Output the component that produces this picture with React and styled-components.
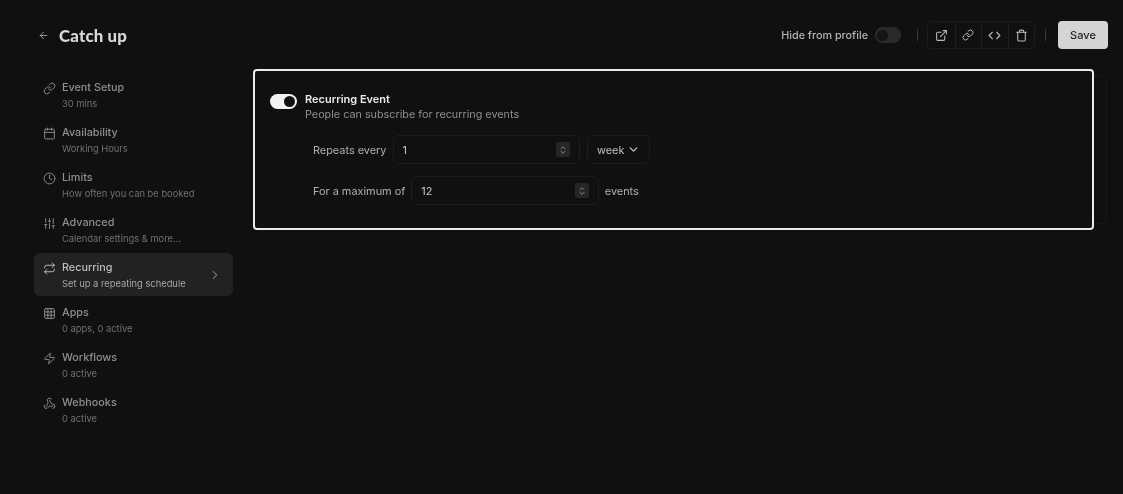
import React from "react";
import styled, { createGlobalStyle } from "styled-components";
import {
  ArrowLeft,
  Link,
  Calendar,
  Clock,
  SlidersVertical,
  Repeat,
  Grid3x3,
  Zap,
  Webhook,
  ChevronRight,
  ChevronDown,
  ChevronsUpDown,
  ExternalLink,
  Code,
  Trash,
} from "lucide-react";

const Global = createGlobalStyle`
  html, body {
    margin: 0;
    background: #101010;
  }
  body {
    font-family: Inter, "Liberation Sans", sans-serif;
    color: #d6d6d6;
    overflow: hidden;
  }
  * {
    box-sizing: border-box;
  }
`;

const Page = styled.div`
  width: 1123px;
  height: 494px;
  padding: 21px 15px 0 34px;
  background: #101010;
  filter: blur(0.45px);
`;

const Header = styled.header`
  display: flex;
  align-items: center;
  justify-content: space-between;
  height: 28px;
`;

const TitleRow = styled.div`
  display: flex;
  align-items: center;
  gap: 10px;
  padding-left: 4px;
  color: #b4b4b4;
`;

const Title = styled.h1`
  margin: 0;
  font-family: Lato, Inter, sans-serif;
  font-size: 16.8px;
  font-weight: 900;
  letter-spacing: 0.2px;
  color: #d8d8d8;
`;

const Actions = styled.div`
  display: flex;
  align-items: center;
`;

const HideLabel = styled.span`
  font-size: 10.8px;
  font-weight: 500;
  color: #b4b4b4;
  margin-right: 7px;
`;

const Toggle = styled.span`
  display: flex;
  align-items: center;
  justify-content: ${(p) => (p.$on ? "flex-end" : "flex-start")};
  width: ${(p) => (p.$on ? "27px" : "26px")};
  height: ${(p) => (p.$on ? "15px" : "16px")};
  padding: 2px;
  flex: none;
  border-radius: 9px;
  background: ${(p) => (p.$on ? "#f2f2f2" : "#2a2a2a")};

  &::after {
    content: "";
    width: 11px;
    height: 11px;
    border-radius: 50%;
    background: ${(p) => (p.$on ? "#101010" : "#141414")};
  }
`;

const Divider = styled.span`
  width: 1px;
  height: 12px;
  background: #3a3a3a;
  margin: 0 ${(p) => p.$after}px 0 ${(p) => p.$before}px;
`;

const IconGroup = styled.div`
  display: flex;
  height: 28px;
  border: 1px solid #1c1c1c;
  border-radius: 5px;
`;

const IconButton = styled.span`
  display: flex;
  align-items: center;
  justify-content: center;
  width: 26.5px;
  color: #b8b8b8;

  & + & {
    border-left: 1px solid #1c1c1c;
  }
`;

const SaveButton = styled.span`
  display: flex;
  align-items: center;
  justify-content: center;
  width: 50px;
  height: 28px;
  border-radius: 4px;
  background: #d4d4d4;
  color: #222;
  font-size: 11px;
  font-weight: 500;
`;

const Body = styled.div`
  display: flex;
  gap: 20px;
  margin-top: 20px;
`;

const Sidebar = styled.nav`
  display: flex;
  flex-direction: column;
  width: 199px;
  padding-top: 3px;
  flex: none;
`;

const NavItem = styled.div`
  display: flex;
  height: ${(p) => (p.$active ? "43px" : "45px")};
  margin: ${(p) => (p.$active ? "1px" : "0")} 0;
  padding: ${(p) => (p.$active ? "8px" : "9px")} 9px 0 8.5px;
  gap: 6.5px;
  border-radius: 6px;
  background: ${(p) => (p.$active ? "#222222" : "transparent")};
  color: ${(p) => (p.$active ? "#bdbdbd" : "#8f8f8f")};
`;

const NavIcon = styled.span`
  display: flex;
  width: 13px;
  height: 14px;
  align-items: center;
  flex: none;
`;

const NavText = styled.div`
  flex: 1;
`;

const NavTitle = styled.div`
  font-size: 10.8px;
  line-height: 14px;
  font-weight: 500;
`;

const NavSub = styled.div`
  font-size: 9.35px;
  line-height: 12px;
  margin-top: 3px;
  color: ${(p) => (p.$active ? "#a8a8a8" : "#717171")};
`;

const NavArrow = styled.span`
  display: flex;
  align-items: center;
  height: 27px;
  margin-right: 2px;
  color: #8a8a8a;
`;

const Main = styled.main`
  position: relative;
  flex: 1;
  height: 161px;
`;

const GhostEdge = styled.div`
  position: absolute;
  top: 6px;
  bottom: 6px;
  left: 0;
  right: 1px;
  border: 1px solid #181818;
  border-radius: 6px;
`;

const Card = styled.section`
  position: relative;
  width: 841px;
  height: 161px;
  padding: 21px 15px 0;
  border: 2px solid #ececec;
  border-radius: 4px;
  background: #101010;
`;

const ToggleRow = styled.div`
  display: flex;
  gap: 8px;
`;

const ToggleSlot = styled.div`
  padding-top: 2px;
`;

const FeatureTitle = styled.div`
  font-size: 11px;
  line-height: 14px;
  font-weight: 600;
  color: #e8e8e8;
`;

const FeatureSub = styled.div`
  font-size: 10.8px;
  line-height: 15px;
  margin-top: 1px;
  color: #8f8f8f;
`;

const Fields = styled.div`
  display: flex;
  flex-direction: column;
  gap: 12px;
  margin-top: 13px;
  padding-left: 43px;
`;

const FieldRow = styled.div`
  display: flex;
  align-items: center;
  gap: 6px;
  font-size: 10.9px;
  color: #b0b0b0;
`;

const NumberBox = styled.div`
  display: flex;
  align-items: center;
  justify-content: space-between;
  width: 187.5px;
  height: 29px;
  padding: 0 9px;
  border: 1px solid #1c1c1c;
  border-radius: 5px;
  color: #c8c8c8;
`;

const Stepper = styled.span`
  display: flex;
  align-items: center;
  justify-content: center;
  width: 14px;
  height: 15px;
  border-radius: 2px;
  background: #262626;
  color: #999;
`;

const SelectBox = styled.div`
  display: flex;
  align-items: center;
  gap: 3px;
  height: 29px;
  margin-left: 1px;
  padding: 0 9px;
  border: 1px solid #1c1c1c;
  border-radius: 5px;
  color: #c0c0c0;
`;

const navItems = [
  { icon: Link, title: "Event Setup", sub: "30 mins" },
  { icon: Calendar, title: "Availability", sub: "Working Hours" },
  { icon: Clock, title: "Limits", sub: "How often you can be booked" },
  { icon: SlidersVertical, title: "Advanced", sub: "Calendar settings & more..." },
  { icon: Repeat, title: "Recurring", sub: "Set up a repeating schedule", active: true },
  { icon: Grid3x3, title: "Apps", sub: "0 apps, 0 active" },
  { icon: Zap, title: "Workflows", sub: "0 active" },
  { icon: Webhook, title: "Webhooks", sub: "0 active" },
];

export default function App() {
  return (
    <Page>
      <Global />
      <Header>
        <TitleRow>
          <ArrowLeft size={11} strokeWidth={1.75} />
          <Title>Catch up</Title>
        </TitleRow>
        <Actions>
          <HideLabel>Hide from profile</HideLabel>
          <Toggle />
          <Divider $before={16} $after={9} />
          <IconGroup>
            <IconButton><ExternalLink size={13} /></IconButton>
            <IconButton><Link size={12} /></IconButton>
            <IconButton><Code size={13} /></IconButton>
            <IconButton><Trash size={13} /></IconButton>
          </IconGroup>
          <Divider $before={10} $after={12} />
          <SaveButton>Save</SaveButton>
        </Actions>
      </Header>
      <Body>
        <Sidebar>
          {navItems.map((item) => (
            <NavItem key={item.title} $active={item.active}>
              <NavIcon><item.icon size={13} strokeWidth={1.75} /></NavIcon>
              <NavText>
                <NavTitle>{item.title}</NavTitle>
                <NavSub $active={item.active}>{item.sub}</NavSub>
              </NavText>
              {item.active && (
                <NavArrow><ChevronRight size={14} strokeWidth={1.75} /></NavArrow>
              )}
            </NavItem>
          ))}
        </Sidebar>
        <Main>
          <GhostEdge />
          <Card>
            <ToggleRow>
              <ToggleSlot><Toggle $on /></ToggleSlot>
              <div>
                <FeatureTitle>Recurring Event</FeatureTitle>
                <FeatureSub>People can subscribe for recurring events</FeatureSub>
              </div>
            </ToggleRow>
            <Fields>
              <FieldRow>
                Repeats every
                <NumberBox>
                  1
                  <Stepper><ChevronsUpDown size={10} /></Stepper>
                </NumberBox>
                <SelectBox>
                  week
                  <ChevronDown size={13} strokeWidth={2.5} />
                </SelectBox>
              </FieldRow>
              <FieldRow>
                For a maximum of
                <NumberBox>
                  12
                  <Stepper><ChevronsUpDown size={10} /></Stepper>
                </NumberBox>
                events
              </FieldRow>
            </Fields>
          </Card>
        </Main>
      </Body>
    </Page>
  );
}
